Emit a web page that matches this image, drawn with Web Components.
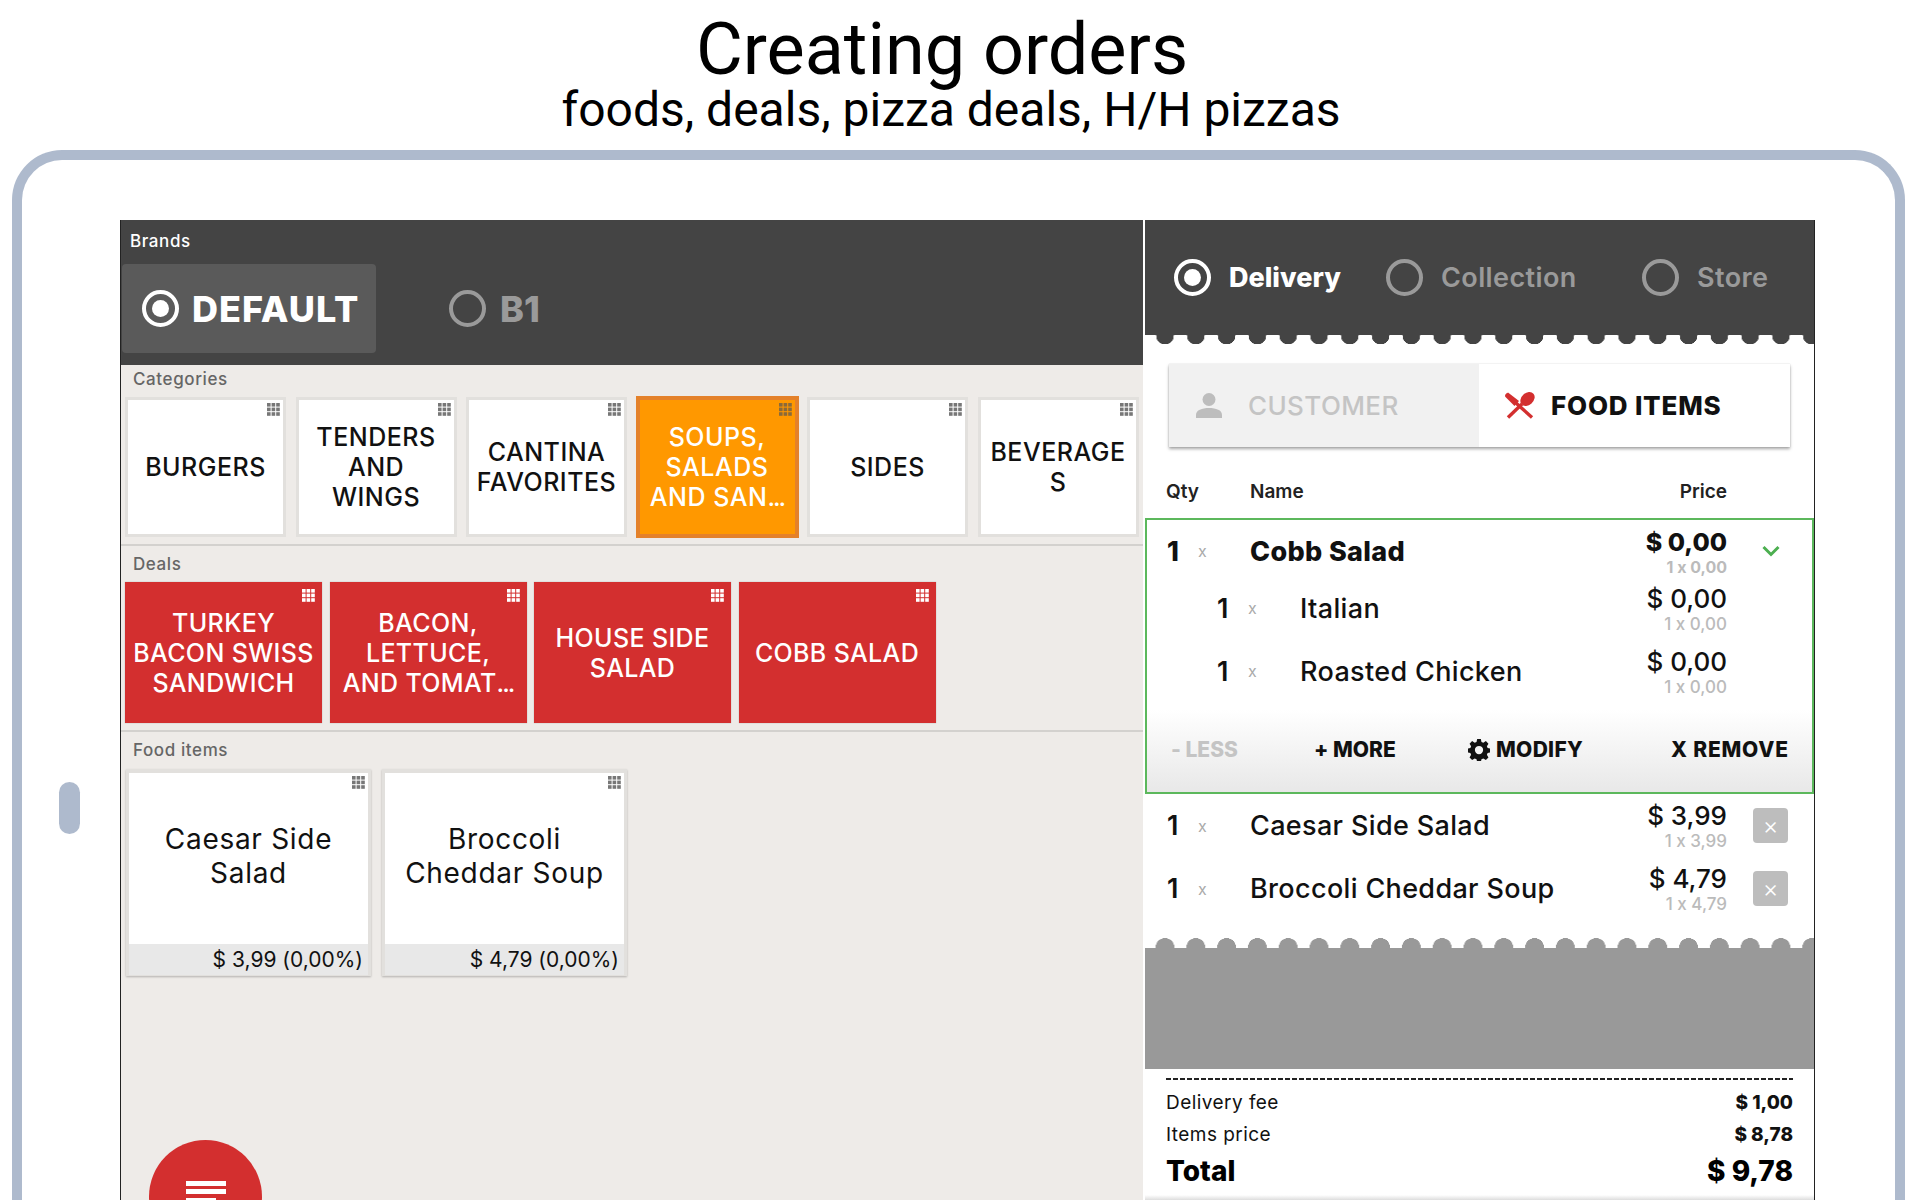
<!DOCTYPE html>
<html><head><meta charset="utf-8"><style>
html,body{margin:0;height:1200px;overflow:hidden;background:#fff}
body{font-family:"Inter","Liberation Sans",sans-serif;font-feature-settings:"calt" 0}
</style></head><body>
<page-heading></page-heading>
<device-frame>
  <div style="display:flex;height:980px">
  <brand-panel></brand-panel>
  <order-panel></order-panel>
  </div>
</device-frame>
<script>
const define=(name,css,html,init)=>customElements.define(name,class extends HTMLElement{
  connectedCallback(){ if(this.shadowRoot) return; const s=this.attachShadow({mode:'open'});
    s.innerHTML='<style>'+css+'</style>'+(typeof html==='function'?html(this):html); if(init)init(this,s);} });
const grip='<svg width="13" height="13" viewBox="0 0 13 13"><g fill="currentColor">'+[0,4.6,9.2].map(y=>[0,4.6,9.2].map(x=>`<rect x="${x}" y="${y}" width="3.6" height="3.6"/>`).join('')).join('')+'</g></svg>';

define('page-heading',`:host{display:flex;flex-direction:column;align-items:center;height:150px;padding:13px 18px 0 0;color:#000;font-family:Roboto,sans-serif;box-sizing:border-box}
h1{margin:0 18px 0 0;font-weight:400;font-size:72px;line-height:73px}h2{margin:0;font-weight:400;font-size:48px;line-height:47px}`,
`<h1>Creating orders</h1><h2>foods, deals, pizza deals, H/H pizzas</h2>`);

define('device-frame',`:host{display:block;position:relative;margin-left:12px;width:1893px;height:1100px;box-sizing:border-box;border:10px solid #aebacd;border-bottom:0;border-radius:50px 50px 0 0;padding:60px 0 0 98px}
.h{position:absolute;left:37px;top:622px;width:21px;height:52px;border-radius:11px;background:#aebacd}`,`<span class="h"></span><slot></slot>`);

define('radio-mark',`:host{display:inline-flex;width:var(--d,37px);height:var(--d,37px);box-sizing:border-box;border:4px solid currentColor;border-radius:50%;align-items:center;justify-content:center;flex:none}
i{width:62%;height:62%;border-radius:50%;background:currentColor;display:none}:host([on]) i{display:block}`,`<i></i>`);

define('menu-tile',`:host{display:flex;position:relative;box-sizing:border-box;align-items:center;justify-content:center;text-align:center;background:#fff;border:3px solid #e2e0dd;color:#111;font-size:25px;line-height:30px;font-weight:500;padding:0 5px;letter-spacing:.5px}
:host([deal]){background:#d32f2f;border:0;color:#fff;box-shadow:0 0 1px rgba(0,0,0,.3);padding:0 6px;letter-spacing:.35px}
:host([active]){background:#ff9800;border:3px solid #e4812a;color:#fff;box-shadow:0 0 0 1px #e4812a}
.g{position:absolute;right:3px;top:3px;color:#777;line-height:0}:host([deal]) .g{color:#fff;right:7px;top:7px}:host([active]) .g{color:#8a6a3a}`,()=>`<span class="g">${grip}</span><span><slot></slot></span>`);

define('food-tile',`:host{display:flex;flex-direction:column;position:relative;box-sizing:border-box;width:245px;height:207px;background:#fff;border:3px solid #e2e0dd;border-top-width:4px;border-bottom-width:1px;box-shadow:0 1px 2px rgba(0,0,0,.25);color:#111}
.n{flex:1;display:flex;align-items:center;justify-content:center;text-align:center;font-size:28px;line-height:34px;font-weight:400;padding:0 4px 6px;letter-spacing:.7px}
.p{height:31px;background:#e8e8e8;text-align:right;font-size:21px;line-height:31px;padding-right:5px}
.g{position:absolute;right:3px;top:3px;color:#777;line-height:0}`,
t=>`<span class="g">${grip}</span><div class="n"><slot></slot></div><div class="p">${t.getAttribute('price')}</div>`);

define('tile-section',`:host{display:block;border-bottom:2px solid #d3d1ce;box-sizing:border-box}
:host([last]){border:0}
.l{height:var(--lh,32px);line-height:var(--ll,28px);padding-left:12px;font-size:17px;color:#666;font-weight:500;box-sizing:border-box;letter-spacing:.6px}
.r{display:flex;gap:var(--gap,9.5px);padding-left:var(--pl,4px)}`,
`<div class="l"></div><div class="r"><slot></slot></div>`,(t,s)=>{s.querySelector('.l').textContent=t.getAttribute('label')});

define('brand-panel',`:host{display:block;width:1023px;position:relative;background:#eeebe8;border-left:1px solid #222;box-sizing:border-box;flex:none;height:980px}
.dots{letter-spacing:-2px}
.top{background:#444;height:145px;box-sizing:border-box;padding-top:10px;color:#fff}
.b{font-size:17px;line-height:22px;padding-left:9px;font-weight:500;letter-spacing:.6px}
.row{display:flex;margin-top:12px;margin-left:1px;height:89px;align-items:center}
.on{width:254px;height:89px;background:#5a5a5a;border-radius:4px;display:flex;align-items:center;gap:13px;padding-left:20px;box-sizing:border-box;font-size:36px;font-weight:800;--d:37px;letter-spacing:1px}
.off{display:flex;align-items:center;gap:14px;margin-left:73px;color:#9a9a9a;font-size:36px;font-weight:800}
.fab{position:absolute;left:28px;top:920px;width:113px;height:113px;border-radius:50%;background:#d32f2f;display:flex;justify-content:center;padding-top:41px;box-sizing:border-box}
.cats{height:181px}.deals{height:186px;--gap:7.5px;--pl:4px;--lh:36px;--ll:36px}
menu-tile.c{width:161px;height:140px}
menu-tile.d{width:197px;height:141px}
.food{--gap:11px;--pl:5px;--lh:37px;--ll:36px}`,
`<div class="top"><div class="b">Brands</div><div class="row"><div class="on"><radio-mark on></radio-mark>DEFAULT</div><div class="off"><radio-mark></radio-mark>B1</div></div></div>
<tile-section class="cats" label="Categories">
<menu-tile class="c">BURGERS</menu-tile><menu-tile class="c">TENDERS AND WINGS</menu-tile><menu-tile class="c">CANTINA FAVORITES</menu-tile><menu-tile class="c" active>SOUPS, SALADS AND SAN<span class="dots">...</span></menu-tile><menu-tile class="c">SIDES</menu-tile><menu-tile class="c">BEVERAGE S</menu-tile></tile-section>
<tile-section class="deals" label="Deals">
<menu-tile class="d" deal>TURKEY BACON SWISS SANDWICH</menu-tile><menu-tile class="d" deal>BACON,<br>LETTUCE,<br>AND TOMAT<span class="dots">...</span></menu-tile><menu-tile class="d" deal>HOUSE SIDE SALAD</menu-tile><menu-tile class="d" deal>COBB SALAD</menu-tile></tile-section>
<tile-section class="food" last label="Food items">
<food-tile price="$ 3,99 (0,00%)">Caesar Side Salad</food-tile><food-tile price="$ 4,79 (0,00%)">Broccoli Cheddar Soup</food-tile></tile-section>
<div class="fab"><svg width="40" height="40" viewBox="0 0 40 40" fill="#fff"><rect width="40" height="5"/><rect y="8" width="40" height="5"/><rect y="17" width="30" height="5"/></svg></div>`);

define('scallop-edge',`:host{display:block;height:10px;flex:none;background-repeat:repeat-x;background-size:30.8px 10px;background-position:4.6px 0}
:host([down]){background-image:radial-gradient(circle 9px at 15.4px 0.5px,#444 98%,transparent 100%)}
:host([up]){background-image:radial-gradient(circle 9.5px at 15.4px 9.5px,#999 98%,transparent 100%)}`,'');

define('order-line',`:host{display:grid;flex:none;grid-template-columns:23px 60px 1fr auto var(--lc,87px);align-items:center;color:#111;padding-left:var(--il,22px);box-sizing:border-box;height:var(--h,63px);font-size:27px;font-weight:500}
.q{font-weight:600}.x{color:#aaa;font-size:16px;font-weight:400;padding-left:8px;box-sizing:border-box}
.n{white-space:nowrap;letter-spacing:.35px}
:host([bold]) .q,:host([bold]) .n{font-weight:800}
.p{text-align:right;padding-top:3px;white-space:nowrap}.m{font-size:26px;display:block;line-height:28px;font-weight:500}.s{font-size:17px;color:#bbb;display:block;line-height:22px}
:host([bold]) .m{font-weight:800;font-size:25px}:host([bold]) .s{font-weight:700;font-size:16px}
.e{display:flex;justify-content:flex-start;align-items:center}
.del{display:flex;width:35px;height:35px;background:#bdbdbd;border-radius:4px;color:#fff;align-items:center;justify-content:center;font-size:24px;margin-left:26px;font-weight:300}
svg{margin-left:35px}`,
t=>`<span class="q">1</span><span class="x">x</span><span class="n"><slot></slot></span><span class="p"><span class="m">$ ${t.getAttribute('v')}</span><span class="s">1 x ${t.getAttribute('v')}</span></span><span class="e">${t.hasAttribute('del')?'<span class="del">×</span>':(t.hasAttribute('chev')?'<svg width="18" height="12" viewBox="0 0 18 12"><path d="M1.500 2l7.500 7.500L16.500 2" fill="none" stroke="#4caf50" stroke-width="3"/></svg>':'')}</span>`);

define('order-panel',`:host{display:flex;flex-direction:column;width:669px;margin-left:2px;background:#fff;border-right:1px solid #222;box-sizing:content-box;flex:none;height:980px;position:relative;overflow:hidden}
.hd{background:#444;height:115px;flex:none;display:flex;align-items:center;font-size:27px;box-sizing:border-box;color:#9a9a9a;font-weight:600}
.ty{display:flex;align-items:center;gap:18px;--d:37px;letter-spacing:.4px}
.ty.a{color:#fff;font-weight:800;margin-left:29px;width:212px;letter-spacing:0}.ty.b{width:256px}
.tabs{display:flex;flex:none;margin:19px 0 0 24px;width:621px;height:83px;box-shadow:0 2px 3px rgba(0,0,0,.35),0 0 1px rgba(0,0,0,.2);font-size:26px}
.t1{width:310px;background:#f1f1f1;color:#c4c4c4;display:flex;align-items:center;gap:26px;padding-left:27px;box-sizing:border-box;font-weight:500;letter-spacing:.4px}
.t2{flex:1;margin-left:2px;display:flex;align-items:center;gap:16px;padding-left:24px;font-weight:800;color:#111;background:#fff;letter-spacing:.8px}
.th{display:grid;flex:none;grid-template-columns:84px 1fr auto;padding:0 87px 14px 21px;height:71px;align-items:end;box-sizing:border-box;font-size:19px;font-weight:600;color:#222;line-height:24px}
.box{border:2px solid #5cb85c;height:276px;flex:none;box-sizing:border-box;display:flex;flex-direction:column;--lc:85px;--il:20px}
.acts{margin-top:auto;height:82px;flex:none;background:linear-gradient(#fff,#e8e8e8);display:flex;align-items:center;font-size:21px;font-weight:800;color:#111;position:relative;padding-bottom:3px;box-sizing:border-box}
.acts span{position:absolute;display:flex;align-items:center;gap:6px;white-space:nowrap}
.grayarea{background:#999;height:121px;flex:none}
.foot{padding:0 21px;flex:1}
.dash{height:2px;margin:9px 0 7px;background:repeating-linear-gradient(90deg,#222 0 5px,transparent 5px 7px)}
.fr{display:flex;justify-content:space-between;font-size:19px;height:32px;line-height:32px;color:#111}.fr span{letter-spacing:.45px}.fr b{font-weight:800}
.tot{font-size:28px;font-weight:800;height:41px;line-height:41px;display:flex;justify-content:space-between}
.shade{height:5px;flex:none;background:linear-gradient(#fff,#ddd)}`,
`<div class="hd"><div class="ty a"><radio-mark on></radio-mark>Delivery</div><div class="ty b"><radio-mark></radio-mark>Collection</div><div class="ty"><radio-mark></radio-mark>Store</div></div>
<scallop-edge down></scallop-edge>
<div class="tabs"><div class="t1"><svg width="26" height="25" viewBox="0 0 26 25" fill="#bdbdbd"><circle cx="13" cy="6.500" r="6.500"/><path d="M0 25v-3c0-5 6-7 13-7s13 2 13 7v3z"/></svg>CUSTOMER</div>
<div class="t2"><svg width="30" height="27" viewBox="0 0 30 27" fill="#d32f2f"><path d="M27 25.500L1 2" fill="none" stroke="#d32f2f" stroke-width="3.400"/><path d="M0 4.500L3 .5l11 8.500-4.500 5z"/><path d="M17 12L3 25.500" fill="none" stroke="#d32f2f" stroke-width="3.400"/><ellipse cx="22.500" cy="7" rx="8" ry="6" transform="rotate(-42 22.500 7)"/></svg>FOOD ITEMS</div></div>
<div class="th"><span>Qty</span><span>Name</span><span>Price</span></div>
<div class="box">
<order-line bold chev v="0,00" style="--h:62px;margin-bottom:-5px">Cobb Salad</order-line>
<order-line v="0,00" style="--il:70px;--h:62px;margin-bottom:1px">Italian</order-line>
<order-line v="0,00" style="--il:70px;--h:62px">Roasted Chicken</order-line>
<div class="acts"><span style="left:24px;color:#c4c4c4">- LESS</span><span style="left:167px">+ MORE</span>
<span style="left:321px;letter-spacing:.3px"><svg width="22" height="22" viewBox="0 0 24 24" fill="#111"><path fill-rule="evenodd" d="M10 0h4l.7 3.200 2 .8 2.800-1.700 2.800 2.800-1.700 2.800.8 2 3.200.7v4l-3.200.7-.8 2 1.700 2.800-2.800 2.800-2.800-1.700-2 .8-.7 3.200h-4l-.7-3.200-2-.8-2.800 1.700-2.800-2.800 1.700-2.800-.8-2-3.200-.7v-4l3.200-.7.8-2-1.700-2.800 2.800-2.800 2.800 1.700 2-.8zM12 7.500a4.500 4.500 0 100 9 4.500 4.500 0 000-9z"/></svg>MODIFY</span>
<span style="left:524px;letter-spacing:.8px">X REMOVE</span></div>
</div>
<order-line del v="3,99">Caesar Side Salad</order-line>
<order-line del v="4,79">Broccoli Cheddar Soup</order-line>
<scallop-edge up style="margin-top:18px"></scallop-edge>
<div class="grayarea"></div>
<div class="foot"><div class="dash"></div>
<div class="fr"><span>Delivery fee</span><b>$ 1,00</b></div><div class="fr"><span>Items price</span><b>$ 8,78</b></div><div class="tot"><span>Total</span><span>$ 9,78</span></div></div>
<div class="shade"></div>`);
</script>
</body></html>
